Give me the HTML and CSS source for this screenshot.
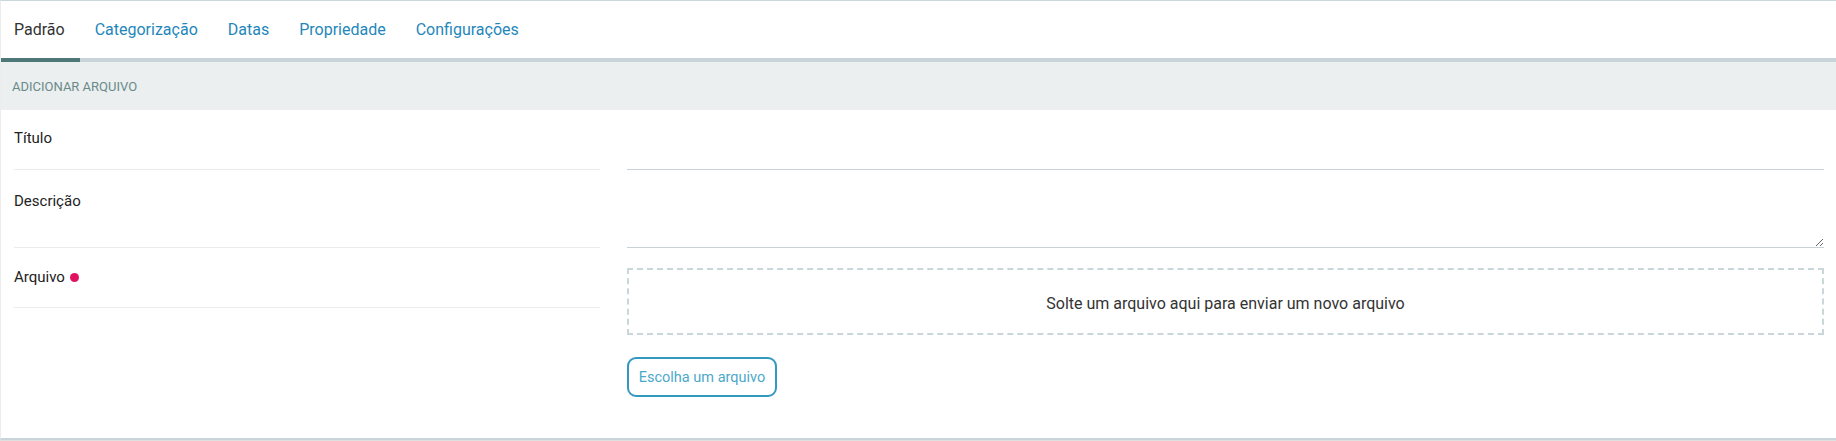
FILE: index.html
```html
<!DOCTYPE html>
<html lang="pt-BR">
<head>
<meta charset="utf-8">
<title>Adicionar arquivo</title>
<link rel="stylesheet" href="styles.css">
</head>
<body>
<div class="panel">
  <nav class="tabs">
    <a class="tab active">Padrão</a>
    <a class="tab">Categorização</a>
    <a class="tab">Datas</a>
    <a class="tab">Propriedade</a>
    <a class="tab">Configurações</a>
  </nav>
  <div class="section-head">ADICIONAR ARQUIVO</div>
  <form class="form">
    <div class="row">
      <div class="label-cell row-title"><label>Título</label></div>
      <div class="field-cell"><input class="text-input" type="text"></div>
    </div>
    <div class="row">
      <div class="label-cell row-desc"><label>Descrição</label></div>
      <div class="field-cell"><textarea class="text-area"></textarea></div>
    </div>
    <div class="row">
      <div class="label-cell row-file"><label>Arquivo</label><span class="required"></span></div>
      <div class="field-cell file-cell">
        <div class="dropzone">Solte um arquivo aqui para enviar um novo arquivo</div>
        <button type="button" class="btn-choose">Escolha um arquivo</button>
      </div>
    </div>
  </form>
</div>
</body>
</html>
```

FILE: styles.css
```css
* { box-sizing: border-box; }
html, body { margin: 0; padding: 0; }
body {
  background: #dedfdf;
  font-family: Roboto, "Liberation Sans", Arial, sans-serif;
  color: #222;
}
.panel {
  background: #fff;
  border-top: 1px solid #c9d6da;
  border-left: 1px solid #ececec;
  border-bottom: 2px solid #c9d4d8;
  height: 440px;
}
.tabs {
  display: flex;
  border-bottom: 4px solid #c8d4d8;
}
.tab {
  display: block;
  padding: 19px 15px 18px;
  font-size: 16px;
  line-height: 20px;
  color: #1f87ba;
  margin-bottom: -4px;
  border-bottom: 4px solid transparent;
}
.tab:first-child {
  padding-left: 13px;
}
.tab.active {
  color: #333;
  border-bottom-color: #4e7777;
}
.section-head {
  background: #ebeff0;
  height: 48px;
  display: flex;
  align-items: center;
  padding-left: 11px;
  font-size: 13px;
  color: #6a8a88;
}
.form {
  padding: 0 12px 0 13px;
}
.row {
  display: flex;
  gap: 27px;
  align-items: flex-start;
}
.label-cell {
  width: 586px;
  flex: none;
  border-bottom: 1px solid #ececec;
  font-size: 15px;
  line-height: 20px;
  color: #222;
  display: flex;
  align-items: flex-start;
}
.row-title { height: 60px; padding-top: 18px; }
.row-desc { height: 78px; padding-top: 21px; }
.row-file { height: 60px; padding-top: 19px; }
.required {
  width: 9px;
  height: 9px;
  border-radius: 50%;
  background: #e0115f;
  margin: 6px 0 0 5px;
}
.field-cell {
  flex: 1;
  min-width: 0;
}
.text-input {
  display: block;
  width: 100%;
  height: 60px;
  border: none;
  border-bottom: 1px solid #c9d3d6;
  outline: none;
  font: inherit;
}
.text-area {
  display: block;
  width: 100%;
  height: 78px;
  border: none;
  border-bottom: 1px solid #c9d3d6;
  outline: none;
  resize: vertical;
  font: inherit;
}
.file-cell {
  padding-top: 20px;
}
.dropzone {
  height: 67px;
  border: 2px dashed #c9d6da;
  display: flex;
  align-items: center;
  justify-content: center;
  padding-top: 3px;
  font-size: 16px;
  color: #333;
}
.btn-choose {
  margin-top: 22px;
  width: 150px;
  height: 40px;
  border: 2px solid #3399c2;
  border-radius: 9px;
  background: #fff;
  color: #4ca8ca;
  font-family: inherit;
  font-size: 14.5px;
  padding: 0;
}
```
